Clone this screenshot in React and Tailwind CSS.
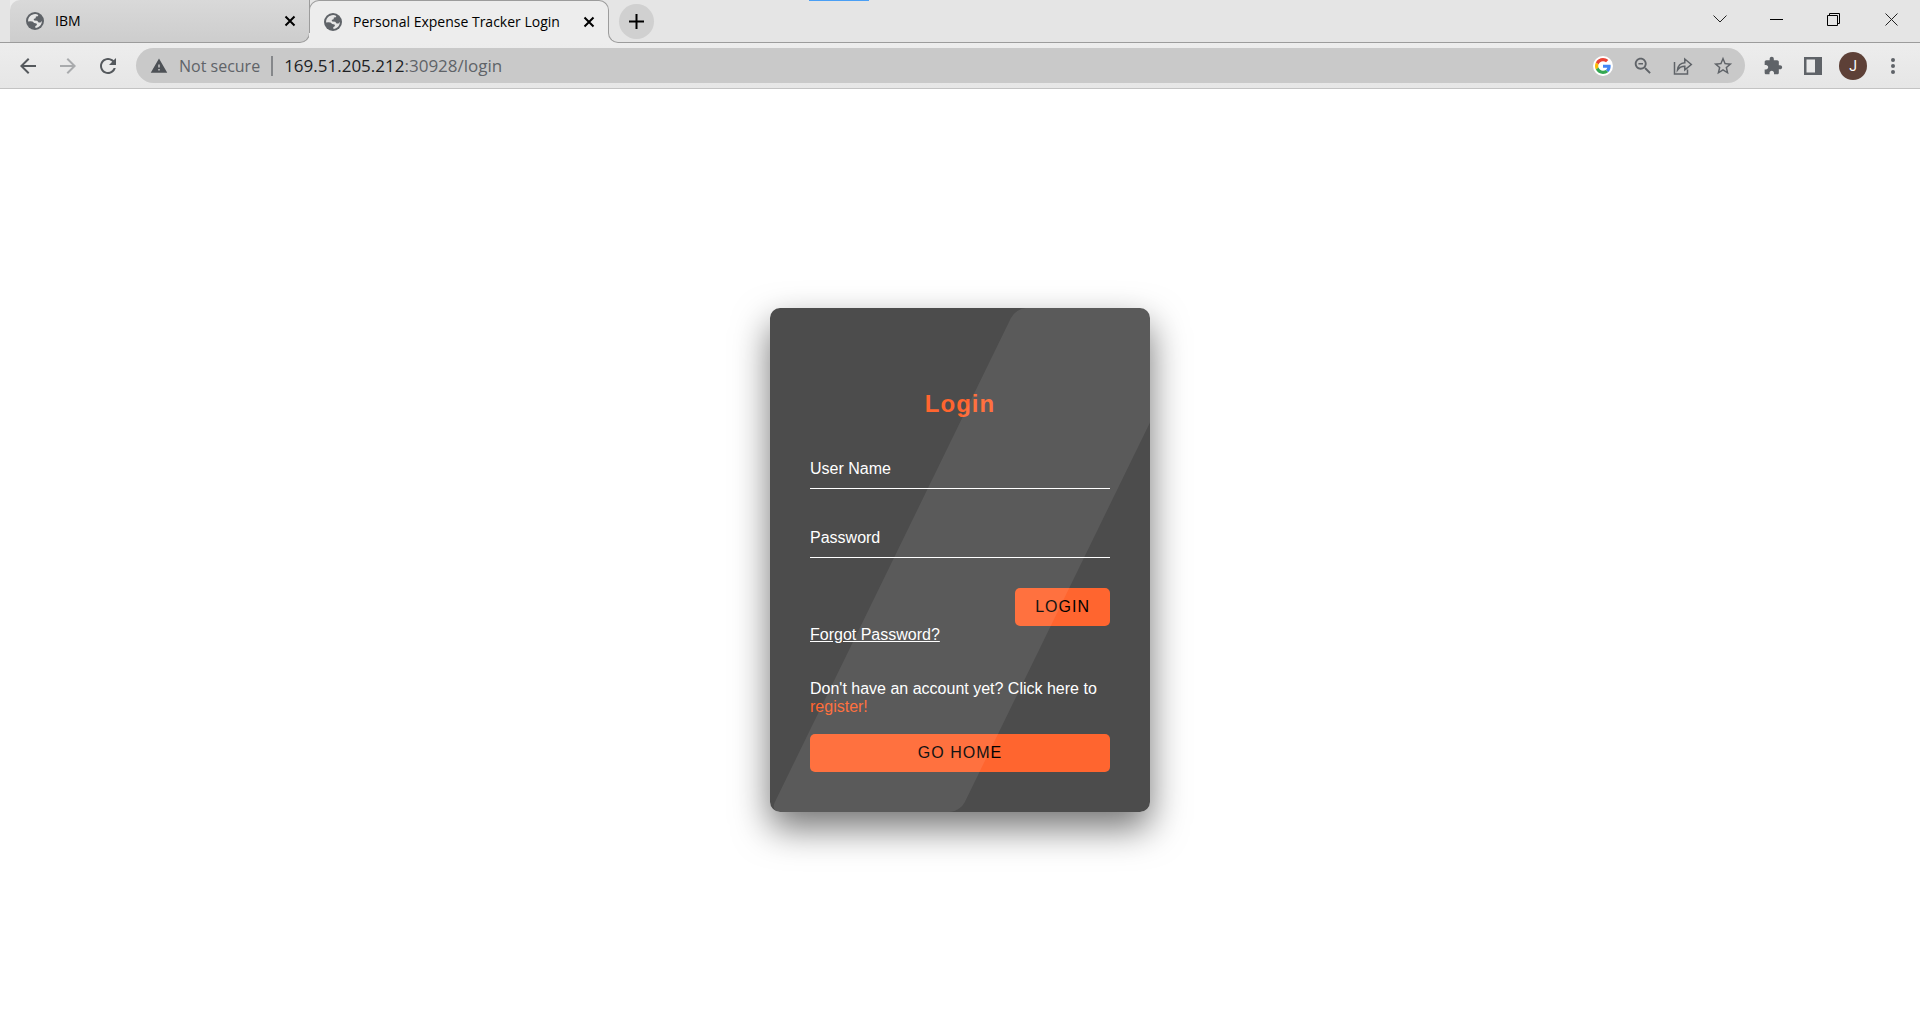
import React from "react";

function Globe() {
  return (
    <svg viewBox="0 0 18 18" className="size-[18px] shrink-0" aria-hidden="true">
      <circle cx="9" cy="9" r="9" fill="#5f6368" />
      <path
        fill="#e6e6e6"
        d="M9.2 2.1C10.300 2.100 11.400 2.400 12.300 2.900L11.800 4.300 9.900 4.500 9.600 6.300 7.600 7 8.300 8.500 11.200 8.700 12.600 10.500 14.500 10.400 15.900 9C15.900 12.600 13.200 15.600 9.500 15.900L9.200 14.200 11 12.900 10.500 11.500 8.200 10.900 6.500 9.600 4.200 9.300 2.100 9.400C1.900 5.500 5 2.200 9.200 2.100Z"
      />
    </svg>
  );
}

function TabClose({ label }) {
  return (
    <button type="button" aria-label={label} className="grid size-5 shrink-0 place-items-center">
      <svg viewBox="0 0 12 12" className="size-3" stroke="#000" strokeWidth="2" fill="none">
        <path d="M1.5 1.5 10.5 10.5M10.5 1.5 1.5 10.5" />
      </svg>
    </button>
  );
}

function TabStrip() {
  return (
    <div className="relative flex h-[43px] shrink-0 items-stretch bg-[#e5e5e5]">
      <div className="absolute inset-x-0 bottom-0 h-px bg-[#9c9c9c]" />
      <div className="absolute left-[809px] top-0 h-px w-[60px] bg-[#4a9ff5]" />
      <div className="relative ml-[10px] flex w-[300px] bg-[#ededed]">
        <div className="flex flex-1 items-center gap-[11px] rounded-tl-[10px] rounded-br-[10px] border-b border-r border-[#9c9c9c] bg-linear-to-b from-[#d9d9d9] to-[#cdcdcd] pl-4 pr-[9px]">
          <Globe />
          <span className="flex-1 text-sm text-black">IBM</span>
          <TabClose label="Close IBM" />
        </div>
        <div className="absolute left-0 top-0 -z-10 size-[10px] bg-[#e5e5e5]" />
      </div>
      <div className="relative -ml-px flex w-[300px] items-center gap-[11px] rounded-t-[10px] border-x border-t border-[#9c9c9c] bg-[#ededed] pb-px pl-[14px] pr-[9px]">
        <div className="absolute -left-px bottom-0 h-[10px] w-px bg-[#ededed]" />
        <div className="absolute -right-[11px] bottom-0 size-[11px] bg-[#ededed]">
          <div className="size-full rounded-bl-[10px] border-b border-l border-[#9c9c9c] bg-[#e5e5e5]" />
        </div>
        <Globe />
        <span className="flex-1 whitespace-nowrap text-sm text-black">Personal Expense Tracker Login</span>
        <TabClose label="Close Personal Expense Tracker Login" />
      </div>
      <button
        type="button"
        aria-label="New tab"
        className="ml-[10px] grid size-[35px] place-items-center self-center rounded-full bg-[#d0d0d0]"
      >
        <svg viewBox="0 0 15 15" className="size-[15px]" stroke="#000" strokeWidth="2" fill="none">
          <path d="M7.5 0V15M0 7.5H15" />
        </svg>
      </button>
      <div className="ml-auto flex items-center pb-[5px]">
        <button type="button" aria-label="Search tabs" className="grid h-full w-[57px] place-items-center">
          <svg viewBox="0 0 14 8" className="h-2 w-3.5" stroke="#222" fill="none">
            <path d="M.5 .5 7 7 13.5 .5" />
          </svg>
        </button>
        <button type="button" aria-label="Minimize" className="grid h-full w-[57px] place-items-center">
          <svg viewBox="0 0 13 13" className="size-[13px]" stroke="#000" fill="none">
            <path d="M0 6.5H13" />
          </svg>
        </button>
        <button type="button" aria-label="Restore" className="grid h-full w-[57px] place-items-center">
          <svg viewBox="0 0 13 13" className="size-[13px]" stroke="#000" fill="none">
            <path d="M.5 2.5H10.5V12.5H.5ZM2.5 2.5V.5H12.5V10.5H10.5" />
          </svg>
        </button>
        <button type="button" aria-label="Close" className="grid h-full w-[58px] place-items-center">
          <svg viewBox="0 0 13 13" className="size-[13px]" stroke="#222" fill="none">
            <path d="M.5 .5 12.5 12.5M12.5 .5 .5 12.5" />
          </svg>
        </button>
      </div>
    </div>
  );
}

const material = {
  back: "M20 11H7.83l5.59-5.59L12 4l-8 8 8 8 1.41-1.41L7.83 13H20v-2z",
  forward: "M12 4l-1.41 1.41L16.17 11H4v2h12.17l-5.58 5.59L12 20l8-8z",
  reload:
    "M17.65 6.35C16.2 4.9 14.21 4 12 4c-4.42 0-7.99 3.58-7.99 8s3.57 8 7.99 8c3.73 0 6.84-2.55 7.73-6h-2.08c-.82 2.33-3.04 4-5.65 4-3.31 0-6-2.69-6-6s2.69-6 6-6c1.66 0 3.14.69 4.22 1.78L13 11h7V4l-2.35 2.35z",
  zoomOut:
    "M15.5 14h-.79l-.28-.27C15.41 12.59 16 11.11 16 9.5 16 5.91 13.09 3 9.5 3S3 5.91 3 9.5 5.91 16 9.5 16c1.61 0 3.09-.59 4.23-1.57l.27.28v.79l5 4.99L20.49 19l-4.99-5zm-6 0C7.01 14 5 11.99 5 9.5S7.01 5 9.5 5 14 7.01 14 9.5 11.99 14 9.5 14zM7 8.75h5v1.500H7z",
  star: "M22 9.24l-7.19-.62L12 2 9.19 8.63 2 9.24l5.46 4.73L5.82 21 12 17.27 18.18 21l-1.63-7.03L22 9.24zM12 15.4l-3.76 2.27 1-4.28-3.32-2.88 4.38-.38L12 6.1l1.71 4.04 4.38.38-3.32 2.88 1 4.28L12 15.4z",
  puzzle:
    "M20.5 11H19V7c0-1.1-.9-2-2-2h-4V3.5C13 2.12 11.88 1 10.5 1S8 2.12 8 3.5V5H4c-1.1 0-1.99.9-1.99 2v3.8H3.5c1.49 0 2.7 1.21 2.7 2.7s-1.21 2.7-2.7 2.7H2V20c0 1.1.9 2 2 2h3.8v-1.5c0-1.49 1.21-2.7 2.7-2.7 1.49 0 2.7 1.21 2.7 2.7V22H17c1.1 0 2-.9 2-2v-4h1.5c1.38 0 2.5-1.12 2.5-2.5S21.88 11 20.5 11z",
  warning: "M1 21h22L12 2 1 21zm12-3h-2v-2h2v2zm0-4h-2v-4h2v4z",
};

function IconButton({ label, path, className }) {
  return (
    <button type="button" aria-label={label} className="grid size-10 shrink-0 place-items-center">
      <svg viewBox="0 0 24 24" className={className} fill="currentColor">
        <path d={path} />
      </svg>
    </button>
  );
}

function Toolbar() {
  return (
    <div className="flex h-[46px] shrink-0 items-center border-b border-[#c3c3c3] bg-linear-to-b from-[#ededed] to-[#e6e6e6] text-[#5f6368]">
      <div className="flex px-2">
        <IconButton label="Back" path={material.back} className="size-6 text-[#55595d]" />
        <IconButton label="Forward" path={material.forward} className="size-6 text-[#a9abad]" />
        <IconButton label="Reload" path={material.reload} className="size-6 text-[#55595d]" />
      </div>
      <div className="flex h-[35px] flex-1 items-center rounded-full bg-[#c9c9c9] pl-[14px] pr-0.5">
        <svg viewBox="0 0 24 24" className="size-[18px] shrink-0" fill="#4d5156" aria-hidden="true">
          <path d={material.warning} />
        </svg>
        <span className="ml-[11px] whitespace-nowrap text-base text-[#5f6368]">Not secure</span>
        <span className="mx-[11px] h-5 w-0.5 bg-[#85878a]" />
        <span className="flex-1 whitespace-nowrap text-[17px] text-[#5f6368]">
          <span className="text-[#202124]">169.51.205.212</span>:30928/login
        </span>
        <button type="button" aria-label="Google" className="grid size-10 place-items-center">
          <span className="grid size-5 place-items-center rounded-full bg-white">
            <svg viewBox="0 0 48 48" className="size-4">
              <path fill="#EA4335" d="M24 9.5c3.54 0 6.71 1.22 9.21 3.6l6.85-6.85C35.9 2.38 30.47 0 24 0 14.62 0 6.51 5.38 2.56 13.22l7.98 6.19C12.43 13.72 17.74 9.5 24 9.5z" />
              <path fill="#4285F4" d="M46.98 24.55c0-1.57-.15-3.09-.38-4.55H24v9.02h12.94c-.58 2.96-2.26 5.48-4.78 7.18l7.73 6c4.51-4.18 7.09-10.36 7.09-17.65z" />
              <path fill="#FBBC05" d="M10.53 28.59A14.5 14.5 0 0 1 9.77 24c0-1.6.27-3.14.76-4.59l-7.98-6.19A23.99 23.99 0 0 0 0 24c0 3.88.92 7.54 2.56 10.78l7.97-6.19z" />
              <path fill="#34A853" d="M24 48c6.48 0 11.93-2.13 15.89-5.81l-7.73-6c-2.15 1.45-4.92 2.3-8.16 2.3-6.26 0-11.57-4.22-13.47-9.91l-7.98 6.19C6.51 42.62 14.62 48 24 48z" />
            </svg>
          </span>
        </button>
        <IconButton label="Zoom" path={material.zoomOut} className="size-[22px]" />
        <button type="button" aria-label="Share" className="grid size-10 place-items-center">
          <svg viewBox="0 0 20 18" className="h-[18px] w-5" fill="none" stroke="currentColor" strokeWidth="1.5">
            <path d="M1.5 5V17H14.5V12.5M4.5 13C5 8.500 7.500 6 11.800 5.700V2L18.300 7.500 11.800 12.800V9.300C8.500 9.300 6.300 10.500 4.500 13Z" />
          </svg>
        </button>
        <IconButton label="Bookmark" path={material.star} className="size-[22px]" />
      </div>
      <div className="flex items-center pl-2 pr-[7px]">
        <IconButton label="Extensions" path={material.puzzle} className="size-5" />
        <button type="button" aria-label="Side panel" className="grid size-10 place-items-center">
          <svg viewBox="0 0 18 18" className="size-[18px]">
            <path fill="currentColor" fillRule="evenodd" d="M0 0H18V18H0ZM2.500 2.500V15.500H11V2.500Z" />
          </svg>
        </button>
        <button type="button" aria-label="Profile" className="grid size-10 place-items-center">
          <span className="grid size-7 place-items-center rounded-full bg-[#5d4037] font-['Roboto',sans-serif] text-sm text-white">J</span>
        </button>
        <button type="button" aria-label="Menu" className="grid size-10 place-items-center">
          <svg viewBox="0 0 4 18" className="h-[18px] w-1" fill="currentColor">
            <circle cx="2" cy="3" r="2" />
            <circle cx="2" cy="9" r="2" />
            <circle cx="2" cy="15" r="2" />
          </svg>
        </button>
      </div>
    </div>
  );
}

function Field({ id, label, type }) {
  return (
    <div className="relative mb-[30px]">
      <input
        id={id}
        type={type}
        className="block h-[39px] w-full border-b border-white bg-transparent text-base text-white outline-none"
      />
      <label htmlFor={id} className="pointer-events-none absolute left-0 top-2.5 text-base leading-[18px] text-white">
        {label}
      </label>
    </div>
  );
}

function LoginCard() {
  return (
    <form
      onSubmit={(event) => event.preventDefault()}
      className="relative w-[380px] overflow-hidden rounded-[10px] bg-[#4c4c4c] p-10 font-['Liberation_Sans',Arial,sans-serif] text-base leading-[18px] text-white"
    >
      <h1 className="mb-[30px] mt-10 text-center text-2xl font-bold leading-8 tracking-[1px] text-[#ff652f]">Login</h1>
      <Field id="username" label="User Name" type="text" />
      <Field id="password" label="Password" type="password" />
      <div className="flex justify-end">
        <button type="submit" className="h-[38px] rounded-[5px] bg-[#ff652f] px-5 tracking-[1px] text-black">
          LOGIN
        </button>
      </div>
      <a href="#forgot" className="underline">
        Forgot Password?
      </a>
      <p className="mt-9">
        Don't have an account yet? Click here to{" "}
        <a href="#register" className="text-[#ff652f]">
          register!
        </a>
      </p>
      <button type="button" className="mt-[18px] block h-[38px] w-full rounded-[5px] bg-[#ff652f] tracking-[1px] text-black">
        GO HOME
      </button>
      <div className="pointer-events-none absolute inset-y-0 left-0 w-1/2 origin-bottom-left -skew-x-26 rounded-[10px] bg-white/8" />
    </form>
  );
}

export default function App() {
  return (
    <div className="flex min-h-screen flex-col bg-white font-['Open_Sans','Noto_Sans',sans-serif]">
      <TabStrip />
      <Toolbar />
      <main className="grid flex-1 place-items-center pt-1">
        <div className="rounded-[10px] shadow-[0_16px_36px_rgba(0,0,0,0.55)]">
          <LoginCard />
        </div>
      </main>
    </div>
  );
}
